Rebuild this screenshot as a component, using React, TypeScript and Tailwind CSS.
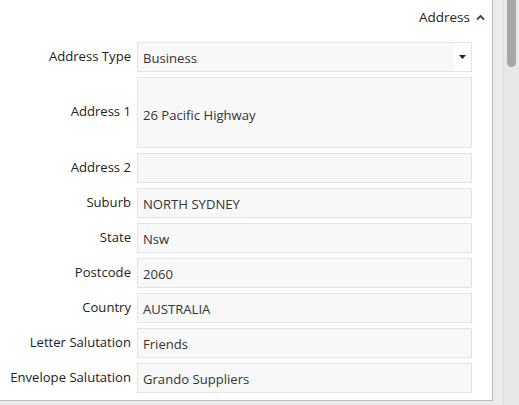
import { ReactNode } from "react";

const font = { fontFamily: '"Open Sans", "Noto Sans", sans-serif' };

function Row({
  label,
  children,
  tall,
}: {
  label: string;
  children?: ReactNode;
  tall?: boolean;
}) {
  return (
    <div className="flex items-center">
      <div className="mb-[1px] w-[131px] shrink-0 text-right text-[13.1px] text-[#222]">
        {label}
      </div>
      <div
        className={`ml-[6px] flex w-[335px] items-center border border-[#e3e3e3] bg-[#f8f8f8] pl-[5px] text-[13.1px] text-[#333] ${
          tall ? "h-[71px] pt-[6px]" : "h-[30px] pt-[4px]"
        }`}
      >
        {children}
      </div>
    </div>
  );
}

export default function App() {
  return (
    <div className="flex h-[405px] w-[519px] overflow-hidden bg-[#ebebeb]" style={font}>
      {/* Panel */}
      <div className="h-[401px] w-[493px] shrink-0 border-b border-r border-[#bdbdbd] bg-white">
        <div className="flex h-[34px] items-center justify-end pr-[7px] pt-[1px] text-[13.5px] text-[#222]">
          <span>Address</span>
          <svg className="ml-[6px]" width="9" height="7" viewBox="0 0 9 7">
            <path d="M1 5.5 L4.5 2 L8 5.5" fill="none" stroke="#444" strokeWidth="1.8" />
          </svg>
        </div>

        <div className="mt-[8px] flex flex-col gap-[5px]">
          <div className="flex items-center">
            <div className="mb-[1px] w-[131px] shrink-0 text-right text-[13.1px] text-[#222]">
              Address Type
            </div>
            <div className="ml-[6px] flex h-[30px] w-[335px] items-stretch border border-[#e3e3e3] bg-[#f8f8f8] text-[13.1px] text-[#333]">
              <div className="flex flex-1 items-center pl-[5px] pt-[4px]">Business</div>
              <div className="flex w-[17px] items-center justify-center bg-white">
                <svg width="7" height="4" viewBox="0 0 7 4">
                  <path d="M0 0 H7 L3.5 4 Z" fill="#222" />
                </svg>
              </div>
            </div>
          </div>
          <Row label="Address 1" tall>
            26 Pacific Highway
          </Row>
          <Row label="Address 2" />
          <Row label="Suburb">NORTH SYDNEY</Row>
          <Row label="State">Nsw</Row>
          <Row label="Postcode">2060</Row>
          <Row label="Country">AUSTRALIA</Row>
          <Row label="Letter Salutation">Friends</Row>
          <Row label="Envelope Salutation">Grando Suppliers</Row>
        </div>
      </div>

      {/* Scrollbar */}
      <div className="ml-[10px] h-full w-[16px] shrink-0 border-l border-[#dcdcdc] bg-[#e8e8e8] pl-[3px] pr-[3px]">
        <div className="h-[67px] w-[9px] rounded-b-[5px] bg-[#a6a6a6]" />
      </div>
    </div>
  );
}
